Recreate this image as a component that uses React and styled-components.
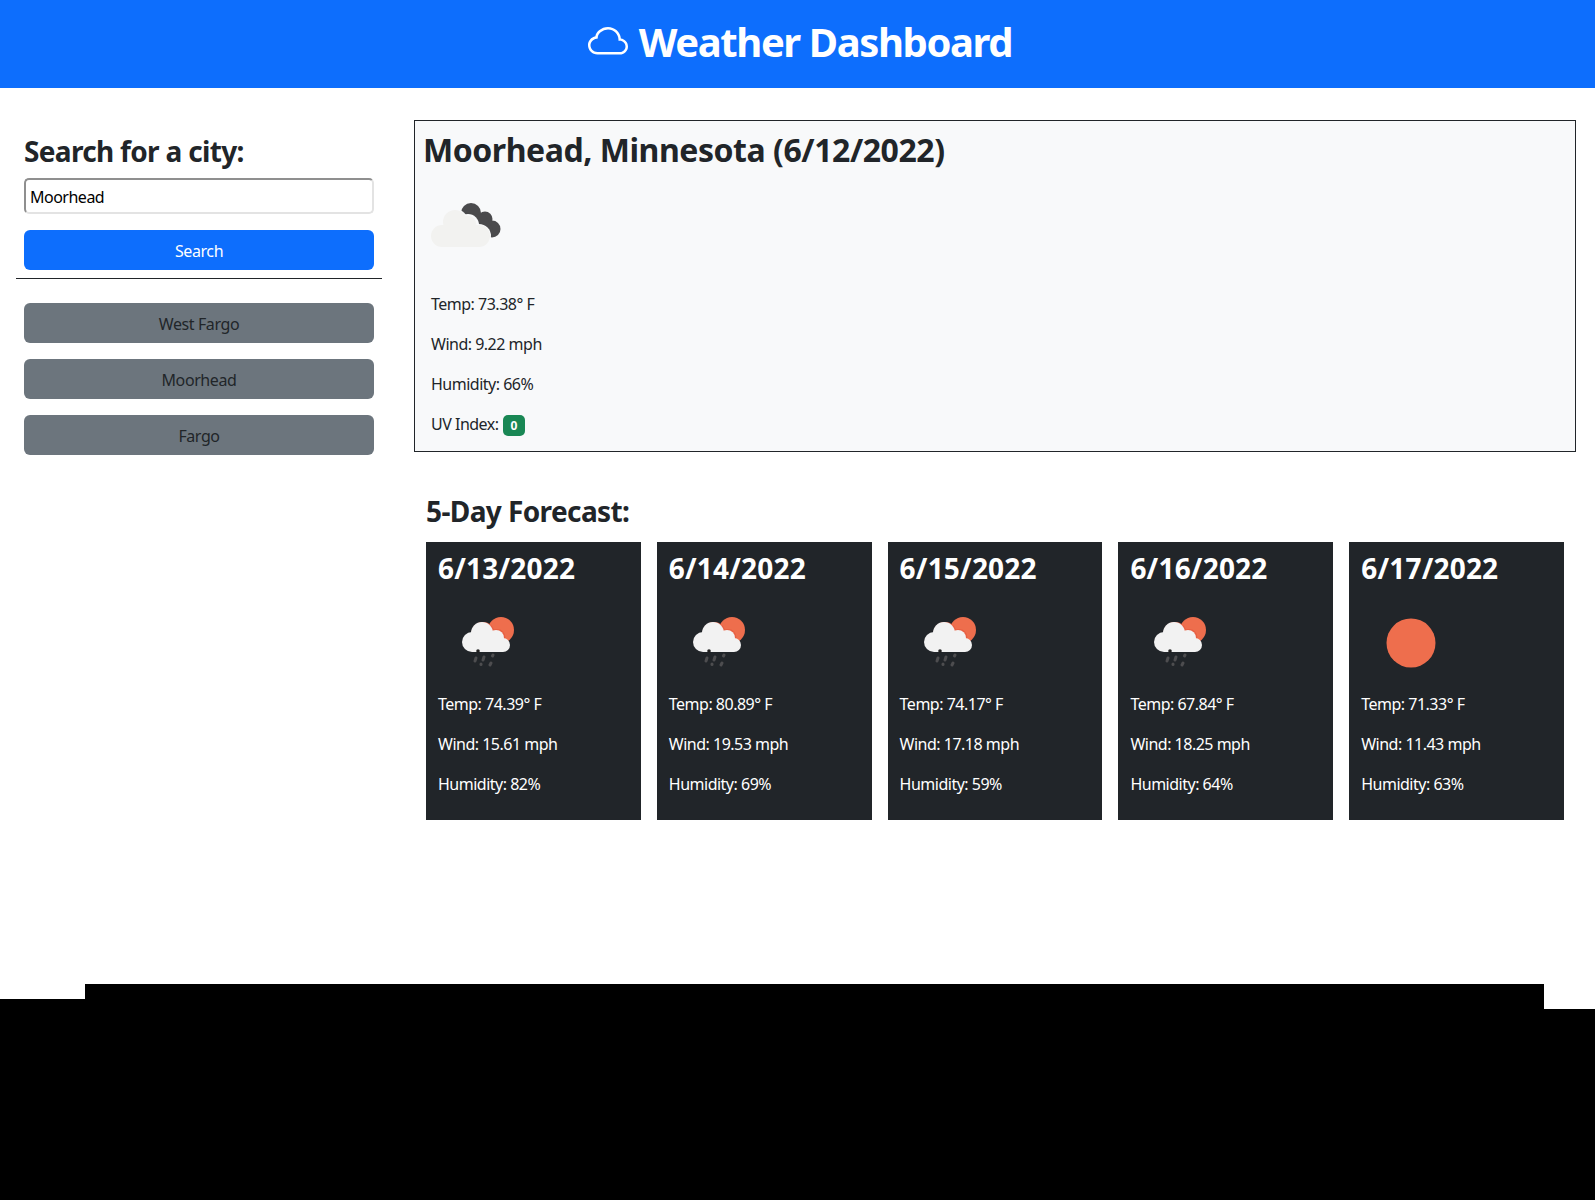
import React from 'react';
import styled, { createGlobalStyle } from 'styled-components';
import { BsCloud } from 'react-icons/bs';

const Global = createGlobalStyle`
  * { box-sizing: border-box; }
  html, body { margin: 0; padding: 0; background: #fff; }
  body {
    font-family: "Noto Sans", "Open Sans", sans-serif;
    font-size: 16px;
    line-height: 24px;
    color: #212529;
  }
`;

const Page = styled.div`
  display: flex;
  flex-direction: column;
  height: 1200px;
`;

const Header = styled.header`
  display: flex;
  align-items: center;
  justify-content: center;
  gap: 11px;
  height: 88px;
  padding: 0 0 4px 5px;
  background: #0d6efd;
  color: #fff;
`;

const Title = styled.h1`
  margin: 0;
  font-size: 40px;
  line-height: 48px;
  font-weight: 700;
  letter-spacing: -1.4px;
`;

const Content = styled.div`
  display: flex;
  padding: 32px 19px 0 16px;
  gap: 32px;
`;

const Sidebar = styled.aside`
  flex: 0 0 366px;
  padding-top: 14px;
`;

const SearchTitle = styled.h3`
  margin: 0 8px 10px;
  font-size: 28px;
  line-height: 34px;
  font-weight: 700;
  letter-spacing: -0.67px;
`;

const CityInput = styled.input`
  display: block;
  width: 350px;
  height: 36px;
  margin: 0 8px 16px;
  padding: 3px 4px 1px;
  border: 2px solid;
  border-color: #8f8f8f #e3e3e3 #e3e3e3 #8f8f8f;
  border-radius: 5px;
  font: inherit;
  letter-spacing: -0.5px;
  color: #000;
  background: #fff;
`;

const Button = styled.button`
  display: block;
  width: 350px;
  height: 40px;
  margin: 0 8px 16px;
  padding: 2px 0 0;
  border: 0;
  border-radius: 6px;
  background: ${p => (p.$primary ? '#0d6efd' : '#6c757d')};
  color: ${p => (p.$primary ? '#fff' : '#212529')};
  font: inherit;
  letter-spacing: -0.4px;
  &:last-child { margin-bottom: 0; }
`;

const Divider = styled.hr`
  margin: -8px 0 24px;
  border: 0;
  border-top: 1px solid #212529;
`;

const Main = styled.main`
  flex: 1;
  min-width: 0;
`;

const CurrentBox = styled.section`
  height: 332px;
  padding: 8px;
  border: 1px solid #212529;
  background: #f8f9fa;
`;

const CityTitle = styled.h2`
  margin: 0 0 6px;
  padding-top: 2px;
  font-size: 32px;
  line-height: 38px;
  font-weight: 700;
  letter-spacing: -0.45px;
`;

const IconSlot = styled.div`
  width: 100px;
  height: 100px;
  margin: ${p => (p.$inset ? '0 0 17px 8px' : '0')};
`;

const Stat = styled.p`
  margin: 0 0 16px;
  padding: ${p => (p.$inset ? '0 8px' : '0')};
  letter-spacing: -0.5px;
  &:last-child { margin-bottom: 0; }
`;

const Badge = styled.span`
  display: inline-block;
  margin-left: 4px;
  padding: 4px 8px;
  border-radius: 5px;
  background: #198754;
  color: #fff;
  font-size: 12px;
  line-height: 13px;
  font-weight: 700;
  letter-spacing: 0;
`;

const Forecast = styled.section`
  padding: 42px 12px 0;
`;

const ForecastTitle = styled.h3`
  margin: 0 0 14px;
  font-size: 28px;
  line-height: 34px;
  font-weight: 700;
  letter-spacing: -0.6px;
`;

const CardRow = styled.div`
  display: grid;
  grid-template-columns: repeat(5, 1fr);
  gap: 16px;
`;

const Card = styled.article`
  height: 278px;
  padding: 8px 12px;
  background: #212529;
  color: #fff;
`;

const CardDate = styled.h3`
  margin: 0 0 8px;
  padding-top: 1px;
  font-size: 28px;
  line-height: 34px;
  font-weight: 700;
  letter-spacing: 0.2px;
`;

const CardIcon = styled(IconSlot)`
  height: 99px;
`;

const Footer = styled.footer`
  display: flex;
  align-items: flex-end;
  margin-top: auto;
  height: 216px;
`;

const FooterPart = styled.div`
  flex: ${p => (p.$width ? `0 0 ${p.$width}px` : 1)};
  height: ${p => p.$height}px;
  background: #000;
`;

const CloudsNight = () => (
  <svg width="100" height="100" viewBox="0 0 100 100">
    <g fill="#4a4a4c">
      <circle cx="40" cy="38" r="10" />
      <circle cx="54" cy="44" r="7.5" />
      <circle cx="61" cy="54" r="8.5" />
      <path d="M36 38 L54 40 L62 54 L42 56 Z" />
    </g>
    <g fill="#f8f9fa">
      <circle cx="24" cy="47" r="13" />
      <circle cx="37" cy="50" r="11" />
      <circle cx="48" cy="61" r="12" />
    </g>
    <g fill="#f2f2f0">
      <circle cx="24" cy="47" r="12" />
      <circle cx="36" cy="50" r="9.5" />
      <circle cx="11" cy="61" r="11" />
      <circle cx="48" cy="61" r="11" />
      <rect x="11" y="50" width="37" height="22" />
    </g>
  </svg>
);

const Sun = () => (
  <svg width="100" height="100" viewBox="0 0 100 100">
    <circle cx="50" cy="50" r="24.5" fill="#ee6e4d" />
  </svg>
);

const RainSun = () => (
  <svg width="100" height="100" viewBox="0 0 100 100">
    <circle cx="63" cy="37" r="13" fill="#ee6e4d" />
    <g fill="#e85f42">
      <circle cx="45" cy="40.5" r="11.5" />
      <circle cx="59" cy="44.5" r="8.5" />
    </g>
    <g fill="#f2f2f2">
      <circle cx="44" cy="40" r="11" />
      <circle cx="34" cy="49" r="10" />
      <circle cx="58" cy="45" r="8" />
      <circle cx="65" cy="52" r="7" />
      <rect x="34" y="44" width="31" height="15" />
    </g>
    <circle cx="40" cy="58" r="1.8" fill="#222" />
    <g stroke="#4d4d4f" strokeWidth="3" strokeLinecap="round">
      <path d="M38 65 L37 68" />
      <path d="M46 64 L45 67" />
      <path d="M55 62 L54.5 63" />
      <path d="M43 71 L43 71.5" />
      <path d="M53 70 L52 72" />
    </g>
  </svg>
);

const cities = ['West Fargo', 'Moorhead', 'Fargo'];

const days = [
  { date: '6/13/2022', temp: '74.39', wind: '15.61', humidity: 82, icon: <RainSun /> },
  { date: '6/14/2022', temp: '80.89', wind: '19.53', humidity: 69, icon: <RainSun /> },
  { date: '6/15/2022', temp: '74.17', wind: '17.18', humidity: 59, icon: <RainSun /> },
  { date: '6/16/2022', temp: '67.84', wind: '18.25', humidity: 64, icon: <RainSun /> },
  { date: '6/17/2022', temp: '71.33', wind: '11.43', humidity: 63, icon: <Sun /> },
];

const App = () => (
  <Page>
    <Global />
    <Header>
      <BsCloud size={40} />
      <Title>Weather Dashboard</Title>
    </Header>
    <Content>
      <Sidebar>
        <SearchTitle>Search for a city:</SearchTitle>
        <CityInput defaultValue="Moorhead" />
        <Button $primary>Search</Button>
        <Divider />
        {cities.map(city => <Button key={city}>{city}</Button>)}
      </Sidebar>
      <Main>
        <CurrentBox>
          <CityTitle>Moorhead, Minnesota (6/12/2022)</CityTitle>
          <IconSlot $inset><CloudsNight /></IconSlot>
          <Stat $inset>Temp: 73.38° F</Stat>
          <Stat $inset>Wind: 9.22 mph</Stat>
          <Stat $inset>Humidity: 66%</Stat>
          <Stat $inset>UV Index:<Badge>0</Badge></Stat>
        </CurrentBox>
        <Forecast>
          <ForecastTitle>5-Day Forecast:</ForecastTitle>
          <CardRow>
            {days.map(day => (
              <Card key={day.date}>
                <CardDate>{day.date}</CardDate>
                <CardIcon>{day.icon}</CardIcon>
                <Stat>Temp: {day.temp}° F</Stat>
                <Stat>Wind: {day.wind} mph</Stat>
                <Stat>Humidity: {day.humidity}%</Stat>
              </Card>
            ))}
          </CardRow>
        </Forecast>
      </Main>
    </Content>
    <Footer>
      <FooterPart $width={85} $height={201} />
      <FooterPart $height={216} />
      <FooterPart $width={51} $height={191} />
    </Footer>
  </Page>
);

export default App;
